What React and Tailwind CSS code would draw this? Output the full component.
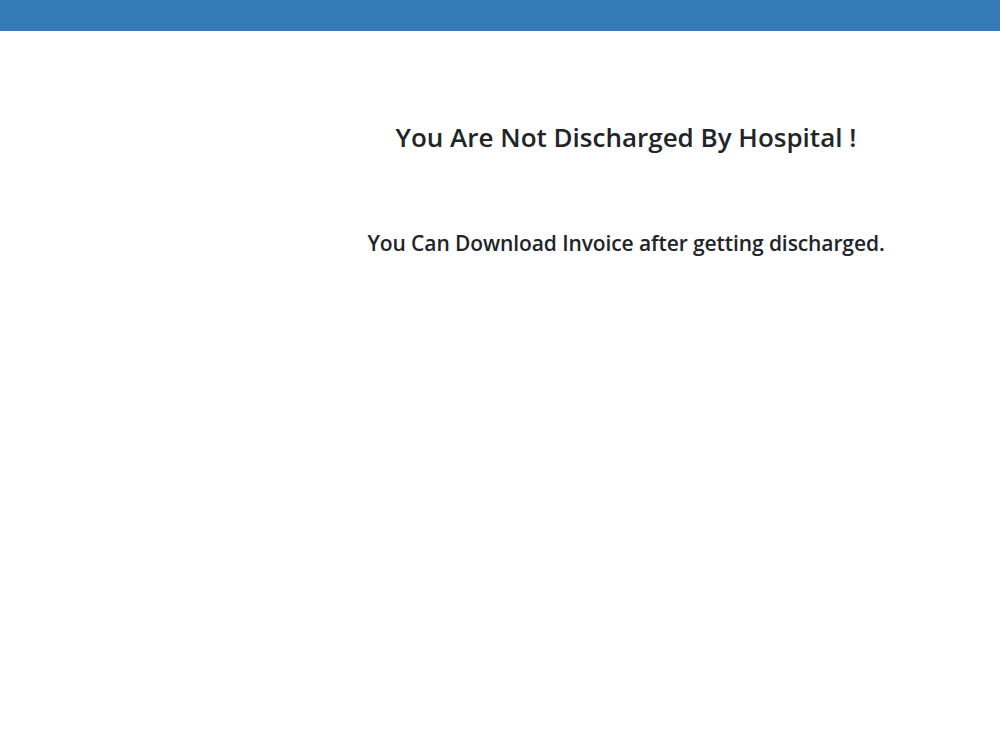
import React from "react";

export default function App() {
  return (
    <div className="min-h-[750px] bg-white text-[#212529] font-['Open_Sans',sans-serif]">
      <div className="h-[31px] bg-[#337ab7]" />
      <div className="flex">
        <div className="w-[252px] shrink-0" />
        <div className="flex-1 text-center">
          <h2 className="mt-[90px] text-[26px] font-semibold leading-[32px]">
            You Are Not Discharged By Hospital !
          </h2>
          <h4 className="mt-[76px] text-[21px] font-semibold leading-[28px] tracking-[-0.1px]">
            You Can Download Invoice after getting discharged.
          </h4>
        </div>
      </div>
    </div>
  );
}
